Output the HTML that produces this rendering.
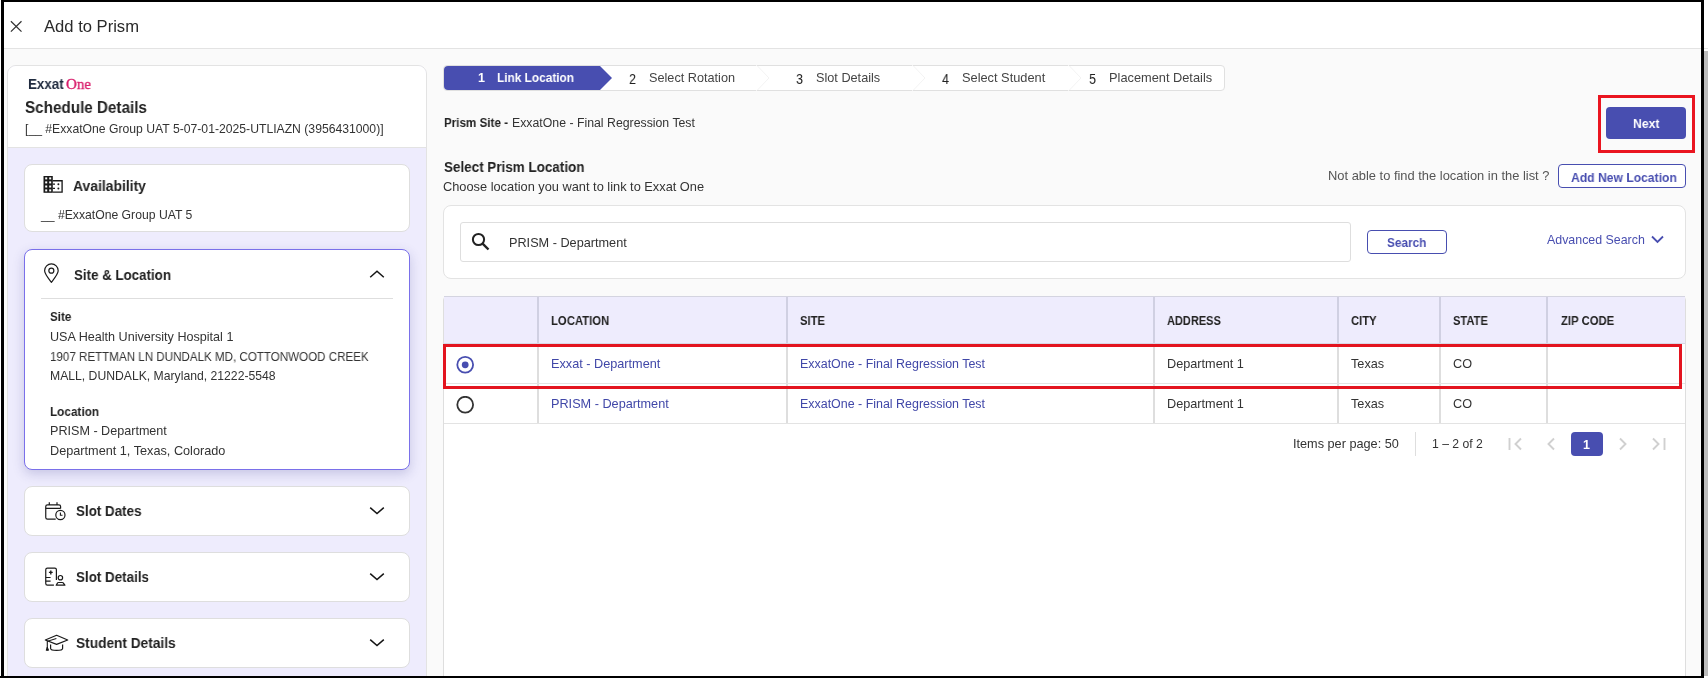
<!DOCTYPE html>
<html><head><meta charset="utf-8"><style>
html,body{margin:0;padding:0;width:1708px;height:678px;overflow:hidden;background:#fafafa;font-family:"Liberation Sans",sans-serif;}
.b{position:absolute;}
.t{position:absolute;white-space:nowrap;line-height:1;will-change:transform;}
#root{position:relative;width:1708px;height:678px;overflow:hidden;}
</style></head><body><div id="root">
<div class="b" style="left:0px;top:0px;width:1708px;height:678px;background:#fafafa;"></div>
<div class="b" style="left:4px;top:2px;width:1697px;height:46px;background:#fff;"></div>
<div class="b" style="left:4px;top:48px;width:1697px;height:1px;background:#e3e3e3;"></div>
<svg class="b" style="left:9px;top:20px" width="15" height="14" viewBox="0 0 15 14"><path d="M1.9 1.3 L12.5 11.6 M12.5 1.3 L1.9 11.6" stroke="#333" stroke-width="1.25" fill="none"/></svg>
<div class="t" style="left:44.3px;top:19.00px;font-size:16.6px;color:#2a2a2a;">Add to Prism</div>
<div class="b" style="left:7px;top:65px;width:420px;height:635px;background:#eeecfd;border:1px solid #e3e3e3;border-radius:9px;box-sizing:border-box;"></div>
<div class="b" style="left:8px;top:66px;width:418px;height:81px;background:#fff;border-radius:8px 8px 0 0;border-bottom:1px solid #e3e3e3;"></div>
<div class="t" style="left:28px;top:77.00px;font-size:14.4px;color:#1f2a3e;font-weight:700;transform:scaleX(0.9317);transform-origin:0 0;">Exxat</div>
<div class="t" style="left:66.4px;top:76.00px;font-size:15.2px;color:#d81b6a;font-family:'Liberation Serif',serif;-webkit-text-stroke:0.35px #d81b6a;transform:scaleX(0.985);transform-origin:0 0;">One</div>
<div class="t" style="left:24.5px;top:100.00px;font-size:15.9px;color:#222;font-weight:700;transform:scaleX(0.9588);transform-origin:0 0;">Schedule Details</div>
<div class="t" style="left:25px;top:123.00px;font-size:12.2px;color:#333;">[__ #ExxatOne Group UAT 5-07-01-2025-UTLIAZN (3956431000)]</div>
<div class="b" style="left:24px;top:164px;width:386px;height:68px;background:#fff;border:1px solid #dedede;border-radius:8px;box-sizing:border-box;"></div>
<div class="t" style="left:73px;top:179.00px;font-size:14.7px;color:#222;font-weight:700;transform:scaleX(0.9472);transform-origin:0 0;">Availability</div>
<div class="t" style="left:41px;top:209.00px;font-size:12.2px;color:#333;">__ #ExxatOne Group UAT 5</div>
<div class="b" style="left:24px;top:249px;width:386px;height:221px;background:#fff;border:1px solid #7a70ea;border-radius:8px;box-sizing:border-box;box-shadow:0 4px 12px rgba(60,60,140,0.22);"></div>
<div class="t" style="left:73.8px;top:268.00px;font-size:14.8px;color:#222;font-weight:700;transform:scaleX(0.9005);transform-origin:0 0;">Site &amp; Location</div>
<div class="b" style="left:41px;top:298px;width:352px;height:1px;background:#dedede;"></div>
<div class="t" style="left:49.6px;top:311.00px;font-size:12.9px;color:#222;font-weight:700;transform:scaleX(0.9003);transform-origin:0 0;">Site</div>
<div class="t" style="left:50px;top:331.00px;font-size:12.6px;color:#333333;">USA Health University Hospital 1</div>
<div class="t" style="left:49.6px;top:351.00px;font-size:12.7px;color:#333333;transform:scaleX(0.9139);transform-origin:0 0;">1907 RETTMAN LN DUNDALK MD, COTTONWOOD CREEK</div>
<div class="t" style="left:50px;top:370.00px;font-size:12.2px;color:#333333;">MALL, DUNDALK, Maryland, 21222-5548</div>
<div class="t" style="left:49.6px;top:406.00px;font-size:12.9px;color:#222;font-weight:700;transform:scaleX(0.9135);transform-origin:0 0;">Location</div>
<div class="t" style="left:50px;top:425.00px;font-size:12.6px;color:#333333;">PRISM - Department</div>
<div class="t" style="left:50px;top:445.00px;font-size:12.7px;color:#333333;">Department 1, Texas, Colorado</div>
<div class="b" style="left:24px;top:486px;width:386px;height:50px;background:#fff;border:1px solid #dedede;border-radius:8px;box-sizing:border-box;"></div>
<div class="t" style="left:75.7px;top:504.00px;font-size:14.7px;color:#222;font-weight:700;transform:scaleX(0.9112);transform-origin:0 0;">Slot Dates</div>
<svg class="b" style="left:369px;top:505px" width="16" height="10" viewBox="0 0 16 10"><path d="M1.2 2.6 L8 8.6 L14.8 2.6" stroke="#151515" stroke-width="1.5" fill="none"/></svg>
<div class="b" style="left:24px;top:552px;width:386px;height:50px;background:#fff;border:1px solid #dedede;border-radius:8px;box-sizing:border-box;"></div>
<div class="t" style="left:75.7px;top:570.00px;font-size:14.7px;color:#222;font-weight:700;transform:scaleX(0.9119);transform-origin:0 0;">Slot Details</div>
<svg class="b" style="left:369px;top:571px" width="16" height="10" viewBox="0 0 16 10"><path d="M1.2 2.6 L8 8.6 L14.8 2.6" stroke="#151515" stroke-width="1.5" fill="none"/></svg>
<div class="b" style="left:24px;top:618px;width:386px;height:50px;background:#fff;border:1px solid #dedede;border-radius:8px;box-sizing:border-box;"></div>
<div class="t" style="left:75.7px;top:636.00px;font-size:14.7px;color:#222;font-weight:700;transform:scaleX(0.9318);transform-origin:0 0;">Student Details</div>
<svg class="b" style="left:369px;top:637px" width="16" height="10" viewBox="0 0 16 10"><path d="M1.2 2.6 L8 8.6 L14.8 2.6" stroke="#151515" stroke-width="1.5" fill="none"/></svg>
<svg class="b" style="left:369px;top:269px" width="16" height="10" viewBox="0 0 16 10"><path d="M1.2 8.3 L8 2.3 L14.8 8.3" stroke="#151515" stroke-width="1.5" fill="none"/></svg>
<svg class="b" style="left:38px;top:170px" width="32" height="30" viewBox="0 0 32 30">
<rect x="5.5" y="6" width="9.3" height="16.8" fill="#1a1a1a"/>
<g fill="#fff"><rect x="7.2" y="7.4" width="2" height="2"/><rect x="11.2" y="7.4" width="2" height="2"/><rect x="7.2" y="11.4" width="2" height="2"/><rect x="11.2" y="11.4" width="2" height="2"/><rect x="7.2" y="15.5" width="2" height="2"/><rect x="11.2" y="15.5" width="2" height="2"/><rect x="7.2" y="19.4" width="2" height="2"/><rect x="11.2" y="19.4" width="2" height="2"/></g>
<path d="M14.8 10.75 H24.1 V22.15 H14.8" stroke="#1a1a1a" stroke-width="1.35" fill="none"/>
<path d="M14.8 14.2 H17 M14.8 18.4 H17" stroke="#1a1a1a" stroke-width="1.2"/>
<circle cx="20.4" cy="14.2" r="1" fill="#1a1a1a"/><circle cx="20.4" cy="18.4" r="1" fill="#1a1a1a"/>
</svg>
<svg class="b" style="left:38px;top:258px" width="32" height="32" viewBox="0 0 32 32">
<path d="M13.4 24.3 C9.2 18.8 6.6 15.6 6.6 12.7 A6.8 6.8 0 0 1 20.2 12.7 C20.2 15.6 17.6 18.8 13.4 24.3 Z" stroke="#1a1a1a" stroke-width="1.2" fill="none" stroke-linejoin="round"/>
<circle cx="13.35" cy="12.7" r="2.5" stroke="#1a1a1a" stroke-width="1.2" fill="none"/>
</svg>
<svg class="b" style="left:40px;top:496px" width="30" height="30" viewBox="0 0 30 30">
<path d="M15.7 23.2 H7.5 Q5.75 23.2 5.75 21.5 V10.5 Q5.75 8.8 7.5 8.8 H18.9 Q20.6 8.8 20.6 10.5 V12.6" stroke="#1a1a1a" stroke-width="1.2" fill="none"/>
<path d="M5.75 12.4 H20.6 M9.3 6.2 V9 M17 6.2 V9" stroke="#1a1a1a" stroke-width="1.2" fill="none"/>
<circle cx="20.4" cy="19" r="4.6" stroke="#1a1a1a" stroke-width="1.2" fill="none"/>
<path d="M20.4 16.5 V19.3 H22.5" stroke="#1a1a1a" stroke-width="1.1" fill="none"/>
</svg>
<svg class="b" style="left:40px;top:562px" width="30" height="30" viewBox="0 0 30 30">
<path d="M13.9 23.2 H7.4 Q5.75 23.2 5.75 21.6 V7.8 Q5.75 6.2 7.4 6.2 H14.8 Q16.4 6.2 16.4 7.8 V17.9" stroke="#1a1a1a" stroke-width="1.2" fill="none"/>
<path d="M5.75 15.5 H10.6 M5.75 19.2 H10.6" stroke="#1a1a1a" stroke-width="1.2"/>
<path d="M10.8 8.6 V12.5 M8.9 10.4 H12.7" stroke="#1a1a1a" stroke-width="1.4"/>
<circle cx="20.4" cy="15.7" r="2.2" stroke="#1a1a1a" stroke-width="1.2" fill="none"/>
<path d="M16.2 23.2 L17.6 20.9 Q17.9 20.5 18.5 20.5 H22.3 Q22.9 20.5 23.2 20.9 L24.9 23.2 Z" stroke="#1a1a1a" stroke-width="1.2" fill="none" stroke-linejoin="round"/>
</svg>
<svg class="b" style="left:40px;top:628px" width="30" height="30" viewBox="0 0 30 30">
<path d="M5.3 12 L16.6 7.3 L27.7 12 L16.6 16.4 Z" stroke="#1a1a1a" stroke-width="1.2" fill="none" stroke-linejoin="round"/>
<path d="M16.4 10.4 L7.3 13.3 V20" stroke="#1a1a1a" stroke-width="1.1" fill="none"/>
<path d="M6.2 22.3 L7.3 19 L8.5 22.3 Z" stroke="#1a1a1a" stroke-width="1" fill="#1a1a1a"/>
<path d="M10.6 16.6 V20.4 Q10.6 22.3 16.6 22.3 Q22.6 22.3 22.6 20.4 V16.6" stroke="#1a1a1a" stroke-width="1.2" fill="none"/>
</svg>
<div class="b" style="left:443px;top:65px;width:782px;height:26px;background:#fff;border:1px solid #e0e0e0;border-radius:4px;box-sizing:border-box;"></div>
<svg class="b" style="left:444px;top:66px" width="170" height="24" viewBox="0 0 170 24"><path d="M4 0 H156 L168 12 L156 24 H4 Q0 24 0 20 V4 Q0 0 4 0 Z" fill="#484eb0"/></svg>
<div class="t" style="left:478px;top:72.00px;font-size:12.5px;color:#fff;font-weight:700;">1</div>
<div class="t" style="left:497px;top:71.00px;font-size:13px;color:#fff;font-weight:700;transform:scaleX(0.9113);transform-origin:0 0;">Link Location</div>
<div class="t" style="left:629px;top:72.00px;font-size:14.8px;color:#222;transform:scaleX(0.8504);transform-origin:0 0;">2</div>
<div class="t" style="left:648.6px;top:72.00px;font-size:12.7px;color:#444;">Select Rotation</div>
<div class="t" style="left:796px;top:72.00px;font-size:14.8px;color:#222;transform:scaleX(0.8504);transform-origin:0 0;">3</div>
<div class="t" style="left:816px;top:72.00px;font-size:12.7px;color:#444;">Slot Details</div>
<div class="t" style="left:942px;top:72.00px;font-size:14.8px;color:#222;transform:scaleX(0.8504);transform-origin:0 0;">4</div>
<div class="t" style="left:962.3px;top:72.00px;font-size:12.8px;color:#444;">Select Student</div>
<div class="t" style="left:1088.5px;top:72.00px;font-size:14.8px;color:#222;transform:scaleX(0.8504);transform-origin:0 0;">5</div>
<div class="t" style="left:1108.7px;top:72.00px;font-size:12.8px;color:#444;">Placement Details</div>
<svg class="b" style="left:757px;top:66px" width="14" height="24" viewBox="0 0 14 24"><path d="M0.5 0 L12 12 L0.5 24" stroke="#f3f3f3" stroke-width="1" fill="none"/></svg>
<div class="b" style="left:756px;top:65px;width:1px;height:1px;background:#f4f4f4;"></div>
<div class="b" style="left:756px;top:90px;width:1px;height:1px;background:#f4f4f4;"></div>
<svg class="b" style="left:913px;top:66px" width="14" height="24" viewBox="0 0 14 24"><path d="M0.5 0 L12 12 L0.5 24" stroke="#f3f3f3" stroke-width="1" fill="none"/></svg>
<div class="b" style="left:912px;top:65px;width:1px;height:1px;background:#f4f4f4;"></div>
<div class="b" style="left:912px;top:90px;width:1px;height:1px;background:#f4f4f4;"></div>
<svg class="b" style="left:1069px;top:66px" width="14" height="24" viewBox="0 0 14 24"><path d="M0.5 0 L12 12 L0.5 24" stroke="#f3f3f3" stroke-width="1" fill="none"/></svg>
<div class="b" style="left:1068px;top:65px;width:1px;height:1px;background:#f4f4f4;"></div>
<div class="b" style="left:1068px;top:90px;width:1px;height:1px;background:#f4f4f4;"></div>
<div class="t" style="left:443.5px;top:117.00px;font-size:12.9px;color:#222;font-weight:700;transform:scaleX(0.9017);transform-origin:0 0;">Prism Site -</div>
<div class="t" style="left:512px;top:117.00px;font-size:12.3px;color:#333333;">ExxatOne - Final Regression Test</div>
<div class="b" style="left:1598px;top:95px;width:97px;height:58px;border:3px solid #ea1520;box-sizing:border-box;"></div>
<div class="b" style="left:1606px;top:107px;width:80px;height:32px;background:#484eb0;border-radius:4px;"></div>
<div class="t" style="left:1633.2px;top:117.00px;font-size:13.5px;color:#fff;font-weight:700;transform:scaleX(0.9057);transform-origin:0 0;">Next</div>
<div class="t" style="left:443.5px;top:160.00px;font-size:14.7px;color:#222;font-weight:700;transform:scaleX(0.9154);transform-origin:0 0;">Select Prism Location</div>
<div class="t" style="left:443px;top:181.00px;font-size:12.8px;color:#333333;">Choose location you want to link to Exxat One</div>
<div class="t" style="left:1327.6px;top:170.00px;font-size:12.9px;color:#555;">Not able to find the location in the list ?</div>
<div class="b" style="left:1558px;top:164px;width:128px;height:24px;border:1.3px solid #484eb0;border-radius:4px;box-sizing:border-box;background:#fff;"></div>
<div class="t" style="left:1570.7px;top:171.00px;font-size:13px;color:#484eb0;font-weight:700;transform:scaleX(0.9331);transform-origin:0 0;">Add New Location</div>
<div class="b" style="left:443px;top:205px;width:1243px;height:74px;background:#fff;border:1px solid #e3e3e3;border-radius:8px;box-sizing:border-box;"></div>
<div class="b" style="left:460px;top:222px;width:891px;height:40px;background:#fff;border:1px solid #dedede;border-radius:3px;box-sizing:border-box;"></div>
<svg class="b" style="left:471px;top:232px" width="19" height="19" viewBox="0 0 19 19"><circle cx="7.5" cy="7.5" r="5.6" stroke="#222" stroke-width="2" fill="none"/><path d="M11.6 11.6 L17.5 17.5" stroke="#222" stroke-width="2.4"/></svg>
<div class="t" style="left:509px;top:237.00px;font-size:12.7px;color:#333333;">PRISM - Department</div>
<div class="b" style="left:1367px;top:230px;width:80px;height:24px;border:1.3px solid #484eb0;border-radius:4px;box-sizing:border-box;"></div>
<div class="t" style="left:1386.7px;top:236.00px;font-size:13px;color:#484eb0;font-weight:700;transform:scaleX(0.9064);transform-origin:0 0;">Search</div>
<div class="t" style="left:1546.5px;top:234.00px;font-size:12.4px;color:#484eb0;">Advanced Search</div>
<svg class="b" style="left:1651px;top:235px" width="13" height="9" viewBox="0 0 13 9"><path d="M1 1.5 L6.5 7 L12 1.5" stroke="#484eb0" stroke-width="1.8" fill="none"/></svg>
<div class="b" style="left:443px;top:296px;width:1243px;height:404px;background:#fff;border:1px solid #dedede;border-radius:4px 4px 0 0;box-sizing:border-box;"></div>
<div class="b" style="left:444px;top:297px;width:1241px;height:47px;background:#eeecfd;"></div>
<div class="b" style="left:444px;top:296px;width:1241px;height:1px;background:#d4d4e0;"></div>
<div class="b" style="left:537px;top:297px;width:2px;height:46px;background:#d0d0e2;"></div>
<div class="b" style="left:537px;top:343px;width:2px;height:80px;background:#dedede;"></div>
<div class="b" style="left:786px;top:297px;width:2px;height:46px;background:#d0d0e2;"></div>
<div class="b" style="left:786px;top:343px;width:2px;height:80px;background:#dedede;"></div>
<div class="b" style="left:1153px;top:297px;width:2px;height:46px;background:#d0d0e2;"></div>
<div class="b" style="left:1153px;top:343px;width:2px;height:80px;background:#dedede;"></div>
<div class="b" style="left:1337px;top:297px;width:2px;height:46px;background:#d0d0e2;"></div>
<div class="b" style="left:1337px;top:343px;width:2px;height:80px;background:#dedede;"></div>
<div class="b" style="left:1439px;top:297px;width:2px;height:46px;background:#d0d0e2;"></div>
<div class="b" style="left:1439px;top:343px;width:2px;height:80px;background:#dedede;"></div>
<div class="b" style="left:1546px;top:297px;width:2px;height:46px;background:#d0d0e2;"></div>
<div class="b" style="left:1546px;top:343px;width:2px;height:80px;background:#dedede;"></div>
<div class="b" style="left:444px;top:343px;width:1241px;height:1px;background:#d8d8e6;"></div>
<div class="b" style="left:444px;top:383px;width:1241px;height:1px;background:#e3e3e3;"></div>
<div class="b" style="left:444px;top:423px;width:1241px;height:1px;background:#e3e3e3;"></div>
<div class="t" style="left:550.8px;top:315.00px;font-size:12.9px;color:#222;font-weight:700;transform:scaleX(0.8780);transform-origin:0 0;">LOCATION</div>
<div class="t" style="left:799.7px;top:315.00px;font-size:12.9px;color:#222;font-weight:700;transform:scaleX(0.8719);transform-origin:0 0;">SITE</div>
<div class="t" style="left:1166.6px;top:315.00px;font-size:12.9px;color:#222;font-weight:700;transform:scaleX(0.8545);transform-origin:0 0;">ADDRESS</div>
<div class="t" style="left:1351.2px;top:315.00px;font-size:12.9px;color:#222;font-weight:700;transform:scaleX(0.8712);transform-origin:0 0;">CITY</div>
<div class="t" style="left:1452.6px;top:315.00px;font-size:12.9px;color:#222;font-weight:700;transform:scaleX(0.8645);transform-origin:0 0;">STATE</div>
<div class="t" style="left:1560.7px;top:315.00px;font-size:12.9px;color:#222;font-weight:700;transform:scaleX(0.8766);transform-origin:0 0;">ZIP CODE</div>
<div class="t" style="left:551px;top:358.00px;font-size:12.7px;color:#4047a8;">Exxat - Department</div>
<div class="t" style="left:800px;top:358.00px;font-size:12.45px;color:#4047a8;">ExxatOne - Final Regression Test</div>
<div class="t" style="left:1167px;top:358.00px;font-size:12.7px;color:#333333;">Department 1</div>
<div class="t" style="left:1351px;top:358.00px;font-size:12.7px;color:#333333;">Texas</div>
<div class="t" style="left:1453px;top:358.00px;font-size:12.7px;color:#333333;">CO</div>
<div class="t" style="left:551px;top:398.00px;font-size:12.7px;color:#4047a8;">PRISM - Department</div>
<div class="t" style="left:800px;top:398.00px;font-size:12.45px;color:#4047a8;">ExxatOne - Final Regression Test</div>
<div class="t" style="left:1167px;top:398.00px;font-size:12.7px;color:#333333;">Department 1</div>
<div class="t" style="left:1351px;top:398.00px;font-size:12.7px;color:#333333;">Texas</div>
<div class="t" style="left:1453px;top:398.00px;font-size:12.7px;color:#333333;">CO</div>
<svg class="b" style="left:455px;top:356px" width="20" height="20" viewBox="0 0 20 20"><circle cx="10.2" cy="8.8" r="7.9" stroke="#484eb0" stroke-width="1.8" fill="none"/><circle cx="10.2" cy="8.8" r="3.4" fill="#484eb0"/></svg>
<svg class="b" style="left:455px;top:396px" width="20" height="20" viewBox="0 0 20 20"><circle cx="10.2" cy="8.7" r="7.9" stroke="#333" stroke-width="1.8" fill="none"/></svg>
<div class="b" style="left:443px;top:344px;width:1239px;height:45px;border:3px solid #e3141f;box-sizing:border-box;"></div>
<div class="t" style="left:1293px;top:438.00px;font-size:12.7px;color:#333333;">Items per page: 50</div>
<div class="b" style="left:1415px;top:432px;width:1px;height:24px;background:#dedede;"></div>
<div class="t" style="left:1432px;top:438.00px;font-size:12.2px;color:#333333;">1 – 2 of 2</div>
<div class="b" style="left:1571px;top:432px;width:32px;height:24px;background:#484eb0;border-radius:4px;"></div>
<div class="t" style="left:1583px;top:439.00px;font-size:12.5px;color:#fff;font-weight:700;">1</div>
<svg class="b" style="left:1508px;top:437px" width="15" height="14" viewBox="0 0 15 14"><path d="M1.5 1 V13 M13 1.5 L7.5 7 L13 12.5" stroke="#d0d0d0" stroke-width="1.9" fill="none"/></svg>
<svg class="b" style="left:1546px;top:437px" width="10" height="14" viewBox="0 0 10 14"><path d="M8 1.5 L2.5 7 L8 12.5" stroke="#d0d0d0" stroke-width="1.9" fill="none"/></svg>
<svg class="b" style="left:1618px;top:437px" width="10" height="14" viewBox="0 0 10 14"><path d="M2 1.5 L7.5 7 L2 12.5" stroke="#d0d0d0" stroke-width="1.9" fill="none"/></svg>
<svg class="b" style="left:1651px;top:437px" width="15" height="14" viewBox="0 0 15 14"><path d="M2 1.5 L7.5 7 L2 12.5 M13.5 1 V13" stroke="#d0d0d0" stroke-width="1.9" fill="none"/></svg>
<div class="b" style="left:0px;top:0px;width:1px;height:678px;background:#fff;"></div>
<div class="b" style="left:1px;top:0px;width:3px;height:678px;background:#000;"></div>
<div class="b" style="left:1px;top:0px;width:1703px;height:2px;background:#000;"></div>
<div class="b" style="left:0px;top:676px;width:1704px;height:2px;background:#000;"></div>
<div class="b" style="left:1701px;top:0px;width:3px;height:678px;background:#000;"></div>
<div class="b" style="left:1704px;top:0px;width:4px;height:678px;background:#fff;"></div>
<div class="b" style="left:1704px;top:48px;width:4px;height:1px;background:#e3e3e3;"></div>
<div class="b" style="left:1704px;top:51px;width:4px;height:625px;background:#bcbcbc;"></div>
</div></body></html>
